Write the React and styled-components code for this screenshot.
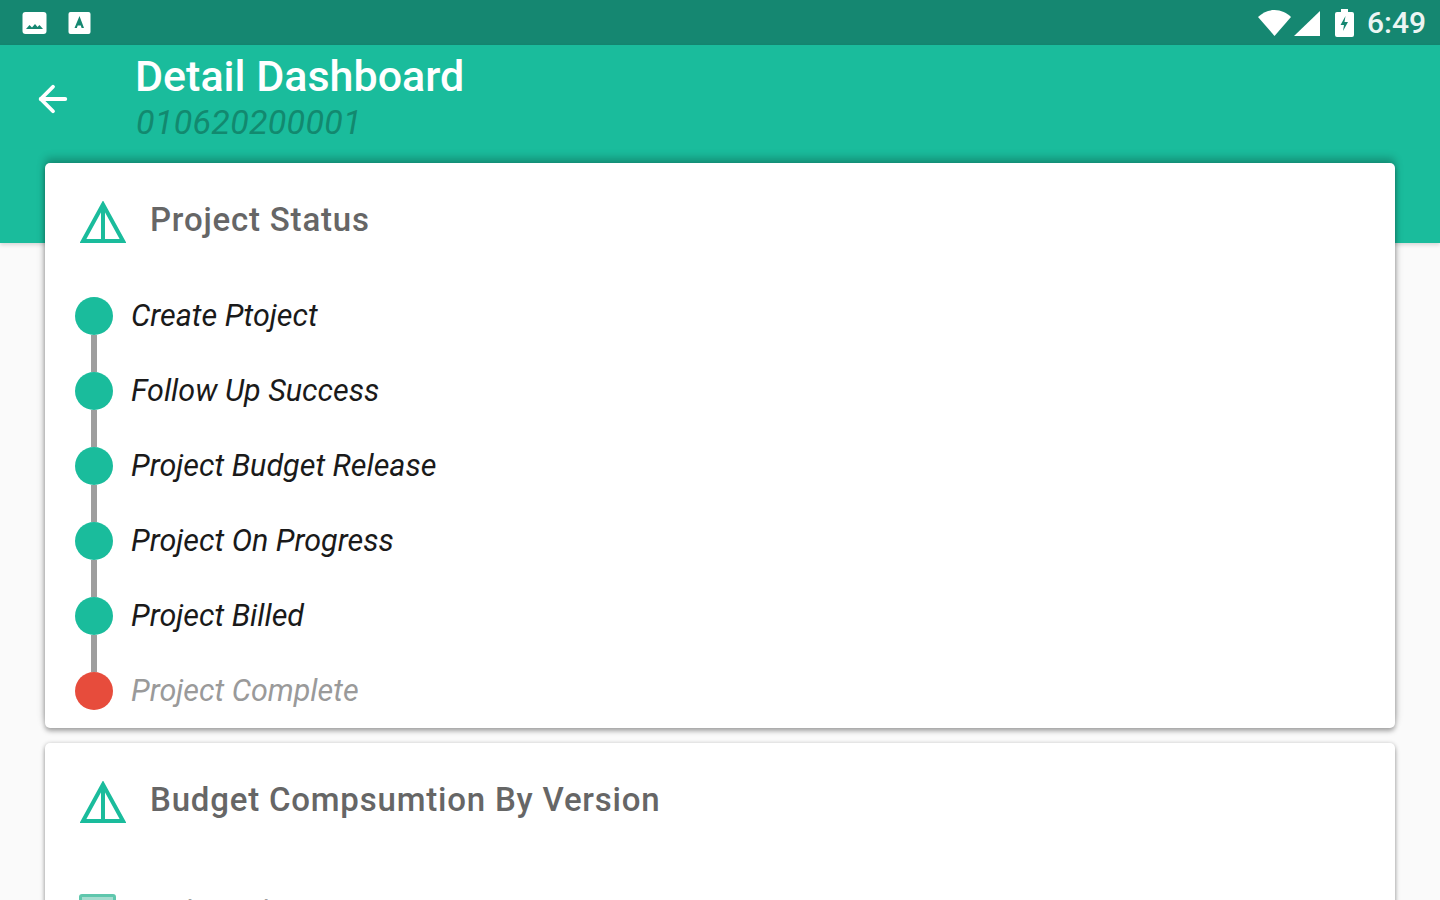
import React from "react";
import styled, { createGlobalStyle } from "styled-components";
import { ArrowLeft } from "lucide-react";

const GlobalStyle = createGlobalStyle`
  html, body {
    margin: 0;
    height: 900px;
    overflow: hidden;
    background: #fafafa;
    font-family: Roboto, "Liberation Sans", sans-serif;
  }
`;

const Page = styled.div`
  width: 1440px;
  height: 900px;
  overflow: hidden;
`;

const StatusBar = styled.div`
  display: flex;
  align-items: center;
  justify-content: space-between;
  height: 45px;
  padding: 0 14px 0 22px;
  box-sizing: border-box;
  background: #158771;
  color: #fff;
`;

const StatusGroup = styled.div`
  display: flex;
  align-items: center;
  gap: ${(p) => p.$gap}px;
`;

const NetworkIcons = styled.div`
  display: flex;
  align-items: flex-end;
  gap: 3px;
  margin-right: 8px;
`;

const Clock = styled.span`
  font-size: 30px;
  font-weight: 500;
  margin-left: 6px;
  opacity: 0.92;
`;

const Hero = styled.div`
  height: 198px;
  background: #1abc9c;
  box-shadow: 0 2px 4px rgba(0, 0, 0, 0.14);
`;

const Toolbar = styled.header`
  display: flex;
  align-items: flex-start;
  height: 105px;
  box-sizing: border-box;
  padding: 6px 0 0 32px;
  margin: 0;
`;

const BackButton = styled.div`
  display: flex;
  width: 104px;
  padding-top: 27px;
  color: #fff;
`;

const TitleBlock = styled.div`
  display: flex;
  flex-direction: column;
`;

const Title = styled.h1`
  margin: 0 0 1px -1px;
  font-size: 43px;
  line-height: 50px;
  font-weight: 500;
  color: #fff;
`;

const Subtitle = styled.div`
  font-size: 34px;
  line-height: 40px;
  font-style: italic;
  color: #12896f;
  letter-spacing: 0.3px;
`;

const Cards = styled.main`
  display: flex;
  flex-direction: column;
  gap: 15px;
  margin-top: -80px;
  padding: 0 45px;
  position: relative;
`;

const Card = styled.section`
  height: ${(p) => p.$height}px;
  box-sizing: border-box;
  padding: 0 30px;
  background: #fff;
  border-radius: 5px;
  box-shadow: 0 3px 5px rgba(0, 0, 0, 0.35),
    ${(p) => (p.$raised ? "0 -5px 8px rgba(0, 0, 0, 0.24)" : "0 0 4px rgba(0, 0, 0, 0.14)")};
`;

const CardHeader = styled.div`
  display: flex;
  align-items: center;
  gap: 24px;
  height: 113px;
  padding-left: 5px;
`;

const CardIcon = styled.svg`
  flex: none;
  margin-top: 4px;
`;

const CardTitle = styled.h2`
  margin: 0 0 1px;
  font-size: 33px;
  font-weight: 500;
  letter-spacing: 0.8px;
  color: #666;
`;

const Timeline = styled.ol`
  display: flex;
  flex-direction: column;
  gap: 37px;
  margin: 21px 0 0;
  padding: 0;
  list-style: none;
`;

const Step = styled.li`
  position: relative;
  display: flex;
  align-items: center;
  gap: 19px;
  height: 38px;

  &:not(:last-child)::after {
    content: "";
    position: absolute;
    left: 16px;
    top: 38px;
    width: 6px;
    height: 37px;
    background: #9e9e9e;
  }
`;

const Dot = styled.span`
  flex: none;
  width: 38px;
  height: 38px;
  border-radius: 50%;
  background: ${(p) => (p.$pending ? "#e74c3c" : "#1abc9c")};
`;

const StepLabel = styled.span`
  margin: -1px 0 0 -1px;
  font-size: 30.5px;
  font-style: italic;
  color: ${(p) => (p.$pending ? "#9a9a9a" : "#1a1a1a")};
`;

const SubRow = styled.div`
  display: flex;
  align-items: flex-start;
  gap: 27px;
  margin-top: 38px;
  padding-left: 4px;
`;

const Swatch = styled.span`
  width: 37px;
  height: 24px;
  background: #a6dccf;
  border: 3px solid #5fc7ad;
  border-radius: 3px;
  box-sizing: border-box;
`;

const SubLabel = styled.span`
  font-size: 28px;
  letter-spacing: 0.8px;
  color: #a0a0a0;
`;

const steps = [
  "Create Ptoject",
  "Follow Up Success",
  "Project Budget Release",
  "Project On Progress",
  "Project Billed",
];

function ImageNote() {
  return (
    <svg width="25" height="24" viewBox="0 0 25 24">
      <rect x="0.5" y="1" width="24" height="22" rx="3" fill="#fff" />
      <path d="M4 18l3.500-4 2.500 2.500 3-3.500 2.500 3 2-2 3.500 4z" fill="#158771" />
    </svg>
  );
}

function ContactNote() {
  return (
    <svg width="23" height="24" viewBox="0 0 23 24">
      <rect x="0.5" y="1" width="22" height="22" rx="2" fill="#fff" />
      <path d="M11.500 5l4.500 12h-2.400l-.8-2.400H9.700L8.900 17H6.500z" fill="#158771" />
    </svg>
  );
}

function Wifi() {
  return (
    <svg width="33" height="26" viewBox="0 0 33 26">
      <path d="M0 7C4 3 10 0 16.500 0S29 3 33 7L16.500 26z" fill="#fff" />
    </svg>
  );
}

function Signal() {
  return (
    <svg width="26" height="25" viewBox="0 0 26 25">
      <path d="M0 25L26 0v25z" fill="#fff" />
    </svg>
  );
}

function Battery() {
  return (
    <svg width="19" height="28" viewBox="0 0 19 28">
      <path d="M6 0h7v3h4a2 2 0 0 1 2 2v21a2 2 0 0 1-2 2H2a2 2 0 0 1-2-2V5a2 2 0 0 1 2-2h4z" fill="#fff" />
      <path d="M10.500 7l-5 9H9l-1 6 5-9H9.500z" fill="#158771" />
    </svg>
  );
}

function TentIcon() {
  return (
    <CardIcon width="46" height="42" viewBox="0 0 46 42">
      <path d="M23 3.500L3 40h40zM23 3.500V40" fill="none" stroke="#1abc9c" strokeWidth="4" />
    </CardIcon>
  );
}

export default function App() {
  return (
    <Page>
      <GlobalStyle />
      <StatusBar>
        <StatusGroup $gap={21}>
          <ImageNote />
          <ContactNote />
        </StatusGroup>
        <StatusGroup $gap={7}>
          <NetworkIcons>
            <Wifi />
            <Signal />
          </NetworkIcons>
          <Battery />
          <Clock>6:49</Clock>
        </StatusGroup>
      </StatusBar>
      <Hero>
        <Toolbar>
          <BackButton>
            <ArrowLeft size={42} strokeWidth={2.2} />
          </BackButton>
          <TitleBlock>
            <Title>Detail Dashboard</Title>
            <Subtitle>010620200001</Subtitle>
          </TitleBlock>
        </Toolbar>
      </Hero>
      <Cards>
        <Card $height={565} $raised>
          <CardHeader>
            <TentIcon />
            <CardTitle>Project Status</CardTitle>
          </CardHeader>
          <Timeline>
            {steps.map((step) => (
              <Step key={step}>
                <Dot />
                <StepLabel>{step}</StepLabel>
              </Step>
            ))}
            <Step>
              <Dot $pending />
              <StepLabel $pending>Project Complete</StepLabel>
            </Step>
          </Timeline>
        </Card>
        <Card $height={400}>
          <CardHeader>
            <TentIcon />
            <CardTitle>Budget Compsumtion By Version</CardTitle>
          </CardHeader>
          <SubRow>
            <Swatch />
            <SubLabel>Budget Chart</SubLabel>
          </SubRow>
        </Card>
      </Cards>
    </Page>
  );
}
